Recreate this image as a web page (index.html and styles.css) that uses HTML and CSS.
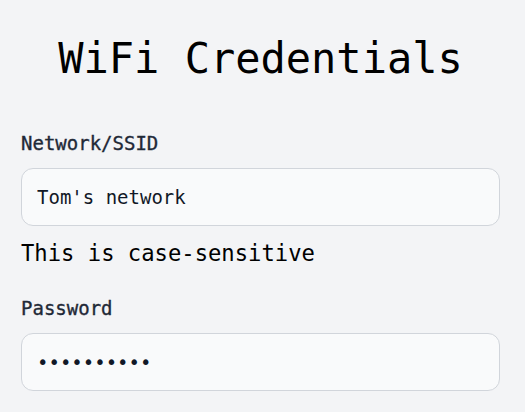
FILE: index.html
```html
<!DOCTYPE html>
<html lang="en">
<head>
<meta charset="utf-8">
<title>WiFi Credentials</title>
<link rel="stylesheet" href="styles.css">
</head>
<body>
<main class="page">
  <h1 class="title">WiFi Credentials</h1>
  <form class="form">
    <div class="field">
      <label class="label" for="ssid">Network/SSID</label>
      <input class="input" id="ssid" type="text" value="Tom's network">
      <p class="hint">This is case-sensitive</p>
    </div>
    <div class="field field-password">
      <label class="label" for="pw">Password</label>
      <input class="input" id="pw" type="password" value="abcdefghij">
    </div>
  </form>
</main>
</body>
</html>
```
FILE: styles.css
```css
html, body {
  margin: 0;
  padding: 0;
  background: #f3f4f6;
}
body {
  font-family: "DejaVu Sans Mono", "Liberation Mono", monospace;
  color: #111827;
}
.page {
  padding: 34px 25px 0 21px;
}
.title {
  margin: 0;
  font-size: 42px;
  line-height: 50px;
  font-weight: 400;
  text-align: center;
  color: #000;
}
.form {
  margin-top: 47px;
  display: flex;
  flex-direction: column;
}
.field {
  display: flex;
  flex-direction: column;
}
.field-password {
  margin-top: 29px;
}
.label {
  font-size: 19px;
  line-height: 24px;
  color: #1f2937;
  margin-bottom: 13px;
  -webkit-text-stroke: 0.35px #1f2937;
}
.input {
  box-sizing: border-box;
  height: 58px;
  width: 100%;
  margin: 0;
  padding: 0 15px;
  border: 1px solid #d1d5db;
  border-radius: 12px;
  background: #f9fafb;
  font-family: inherit;
  font-size: 19px;
  color: #111827;
  outline: none;
}
.hint {
  margin: 13px 0 0;
  font-size: 22.2px;
  line-height: 28px;
  color: #000;
}
```
